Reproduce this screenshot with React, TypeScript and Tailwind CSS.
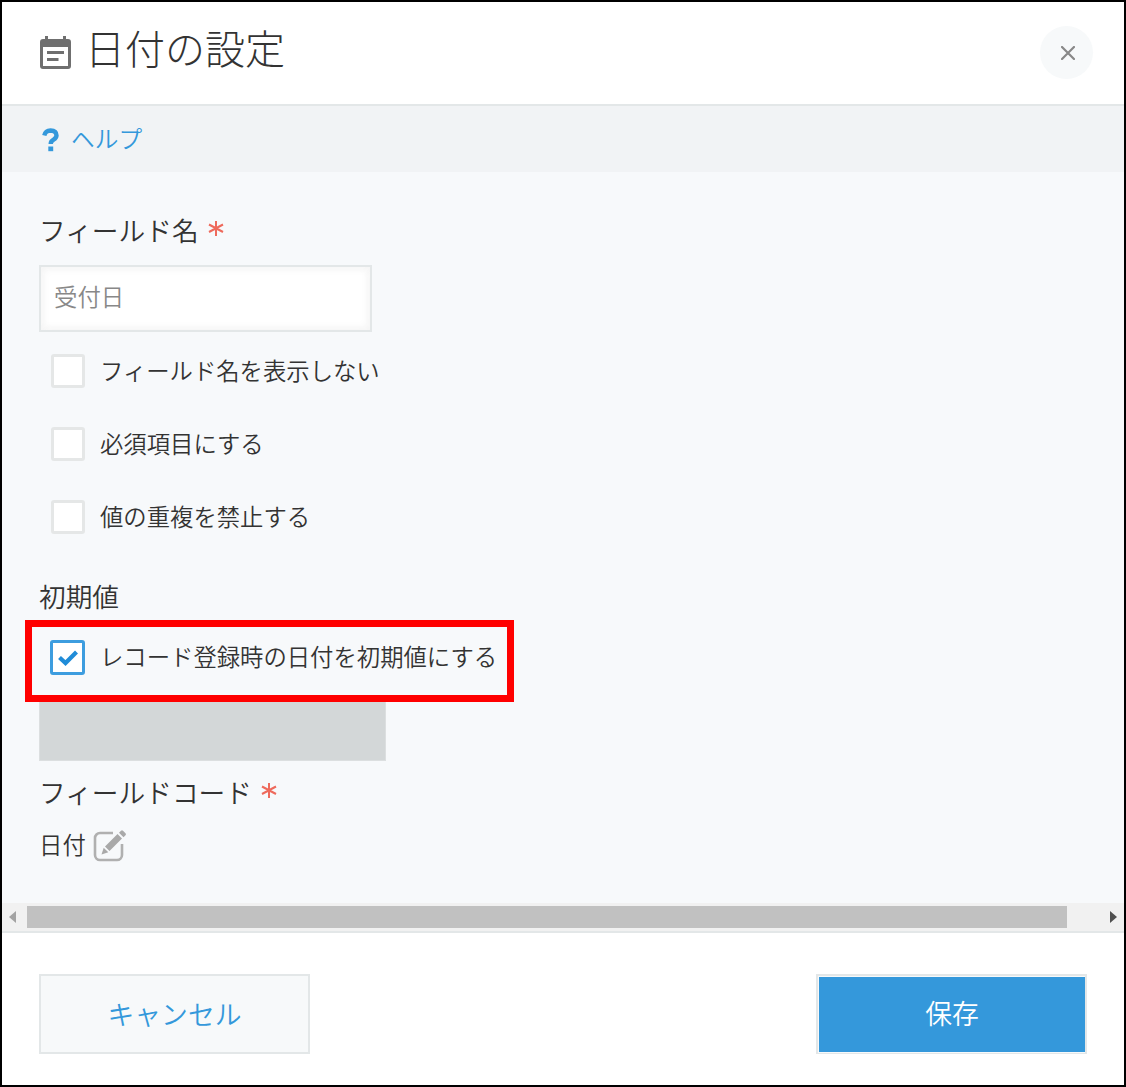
import React, { useState } from 'react';

interface CheckRowProps {
  label: string;
  checked: boolean;
  onChange: () => void;
}

const CalendarIcon = () => (
  <svg width="31" height="35" viewBox="0 0 31 35" className="shrink-0">
    <path fill="#6f6f6f" d="M5 0h3v3h15V0h3v3h2a3 3 0 0 1 3 3v24a3 3 0 0 1-3 3H3a3 3 0 0 1-3-3V6a3 3 0 0 1 3-3h2z" />
    <path fill="#fff" d="M3 11h25v19H3z" />
    <path fill="#6f6f6f" d="M7 15h17v3H7zM7 22h11.500v3H7z" />
  </svg>
);

const EditIcon = () => (
  <svg width="34" height="34" viewBox="0 0 34 34" className="mt-0.5 shrink-0">
    <path
      d="M20 4H7a5 5 0 0 0-5 5V26a5 5 0 0 0 5 5h17a5 5 0 0 0 5-5V15"
      fill="none"
      stroke="#b0b0b0"
      strokeWidth="2.600"
    />
    <path fill="#a9a9a9" d="M8.500 25.500l2.200-6.700 4.600 4.500zM12 17.500L24.500 5l4.500 4.500L16.500 22zM26 3.700L28 1.700q1-1 2 0l2.500 2.500q1 1 0 2l-2 2z" />
  </svg>
);

const CheckRow: React.FC<CheckRowProps> = ({ label, checked, onChange }) => (
  <button type="button" onClick={onChange} className="flex h-[35px] items-center text-left">
    <span className="flex w-[61px] items-center pl-[11px]">
      {checked ? (
        <span className="flex h-[35px] w-[35px] items-center justify-center rounded-[3px] border-3 border-[#3d9ddf] bg-white">
          <svg width="20" height="16" viewBox="0 0 20 16">
            <path d="M1.500 7.500L7.500 13L18.500 2" fill="none" stroke="#208cd8" strokeWidth="4.200" />
          </svg>
        </span>
      ) : (
        <span className="-mt-px ml-px h-[34px] w-[34px] rounded-[3px] border-[3px] border-[#e5e7e7] bg-white" />
      )}
    </span>
    <span className="-mt-0.5 text-[23.350px] leading-[35px] whitespace-nowrap">{label}</span>
  </button>
);

const FieldLabel = ({ text, required }: { text: string; required?: boolean }) => (
  <div className="flex h-10 items-center text-[26.700px] leading-10 whitespace-nowrap">
    <span className="-mt-0.5">{text}</span>
    {required && (
      <svg width="16" height="17" viewBox="0 0 16 17" className="mb-[6px] ml-[9px]">
        <path d="M8 1v15M1 4.500l14 7.500M15 4.500L1 12" stroke="#ee6a5c" strokeWidth="2" fill="none" />
      </svg>
    )}
  </div>
);

export default function App() {
  const [fieldName, setFieldName] = useState('受付日');
  const [hideName, setHideName] = useState(false);
  const [required, setRequired] = useState(false);
  const [unique, setUnique] = useState(false);
  const [useToday, setUseToday] = useState(true);

  return (
    <div className="flex h-[1087px] w-[1126px] flex-col border-2 border-black bg-white font-['Noto_Sans_CJK_JP',sans-serif] font-[350] text-[#333]">
      {/* Header */}
      <header className="flex h-[104px] shrink-0 justify-between border-b-2 border-[#e3e7e8] pr-[31px] pl-[38px]">
        <div className="flex pt-[34px]">
          <CalendarIcon />
          <h1 className="-mt-[18px] ml-[14px] text-[40px] leading-[58px] font-light">日付の設定</h1>
        </div>
        <button type="button" aria-label="閉じる" className="mt-6 flex h-[53px] w-[53px] items-center justify-center rounded-full bg-[#f7f9fa]">
          <svg width="14" height="14" viewBox="0 0 14 14" className="ml-0.5">
            <path d="M1 1l12 12M13 1L1 13" stroke="#888" strokeWidth="2.200" strokeLinecap="round" />
          </svg>
        </button>
      </header>

      {/* Help bar */}
      <div className="flex h-[66px] shrink-0 items-center bg-[#f1f3f5] pl-10 text-[#3498db]">
        <svg width="17" height="24" viewBox="0 0 17 24" className="mt-px mr-[12px] shrink-0">
          <path
            d="M2.300 7.500Q3.500 2.500 8.500 2.500Q14.500 2.800 14.500 7.500Q14.300 10 11.500 11.700Q8.700 13.200 8.700 16"
            fill="none"
            stroke="#3498db"
            strokeWidth="4.400"
          />
          <path fill="#3498db" d="M6.300 18.500h4.900v4.700H6.300z" />
        </svg>
        <a href="#" className="-mt-0.5 text-[23.700px] leading-8">ヘルプ</a>
      </div>

      {/* Settings */}
      <main className="flex h-[731px] shrink-0 flex-col items-start bg-[#f7f9fb] pt-[39px] pl-[37px]">
        <FieldLabel text="フィールド名" required />
        <input
          value={fieldName}
          onChange={e => setFieldName(e.target.value)}
          className="mt-[14px] h-[67px] w-[333px] border-2 border-[#e3e7e8] bg-white px-[13px] pb-1.5 text-[23.400px] text-[#888] shadow-[inset_2px_2px_8px_#f5f5f5,inset_-2px_-2px_8px_#f5f5f5] outline-none"
        />
        <div className="mt-[22px] flex flex-col gap-[38px]">
          <CheckRow label="フィールド名を表示しない" checked={hideName} onChange={() => setHideName(!hideName)} />
          <CheckRow label="必須項目にする" checked={required} onChange={() => setRequired(!required)} />
          <CheckRow label="値の重複を禁止する" checked={unique} onChange={() => setUnique(!unique)} />
        </div>

        <div className="mt-[42px]">
          <FieldLabel text="初期値" />
        </div>
        <div className="mt-[3px] -ml-[14px] h-[82px] w-[489px] border-[7px] border-[#ff0000] pt-[13px] pl-[7px]">
          <CheckRow label="レコード登録時の日付を初期値にする" checked={useToday} onChange={() => setUseToday(!useToday)} />
        </div>
        <div className="h-[59px] w-[347px] border border-t-0 border-[#dcdfe0] bg-[#d3d7d8]" />

        <div className="mt-3">
          <FieldLabel text="フィールドコード" required />
        </div>
        <div className="mt-[14px] flex h-[35px] items-center gap-[7px] text-[23.400px] leading-[35px]">
          日付
          <EditIcon />
        </div>
      </main>

      {/* Horizontal scrollbar */}
      <div className="flex h-[30px] shrink-0 items-center border-b-2 border-[#e3e7e8] bg-[#f1f1f1]">
        <span className="ml-[7px] border-y-[6px] border-r-[7px] border-y-transparent border-r-[#a3a3a3]" />
        <span className="ml-[11px] h-[22px] w-[1040px] bg-[#c1c1c1]" />
        <span className="ml-[43px] border-y-[6px] border-l-[7px] border-y-transparent border-l-[#505050]" />
      </div>

      {/* Footer */}
      <footer className="flex flex-1 items-start justify-between pt-[41px] pr-[37px] pl-[37px] text-[26.800px]">
        <button type="button" className="h-20 w-[271px] border-2 border-[#e3e7e8] bg-[#f7f9fa] text-[#3498db]">キャンセル</button>
        <div className="h-20 w-[271px] border-2 border-b border-[#e3e7e8] bg-[#f7f9fa] pt-px pl-px">
          <button type="button" className="h-[75px] w-[266px] bg-[#3498db] pb-0.5 text-white">保存</button>
        </div>
      </footer>
    </div>
  );
}
